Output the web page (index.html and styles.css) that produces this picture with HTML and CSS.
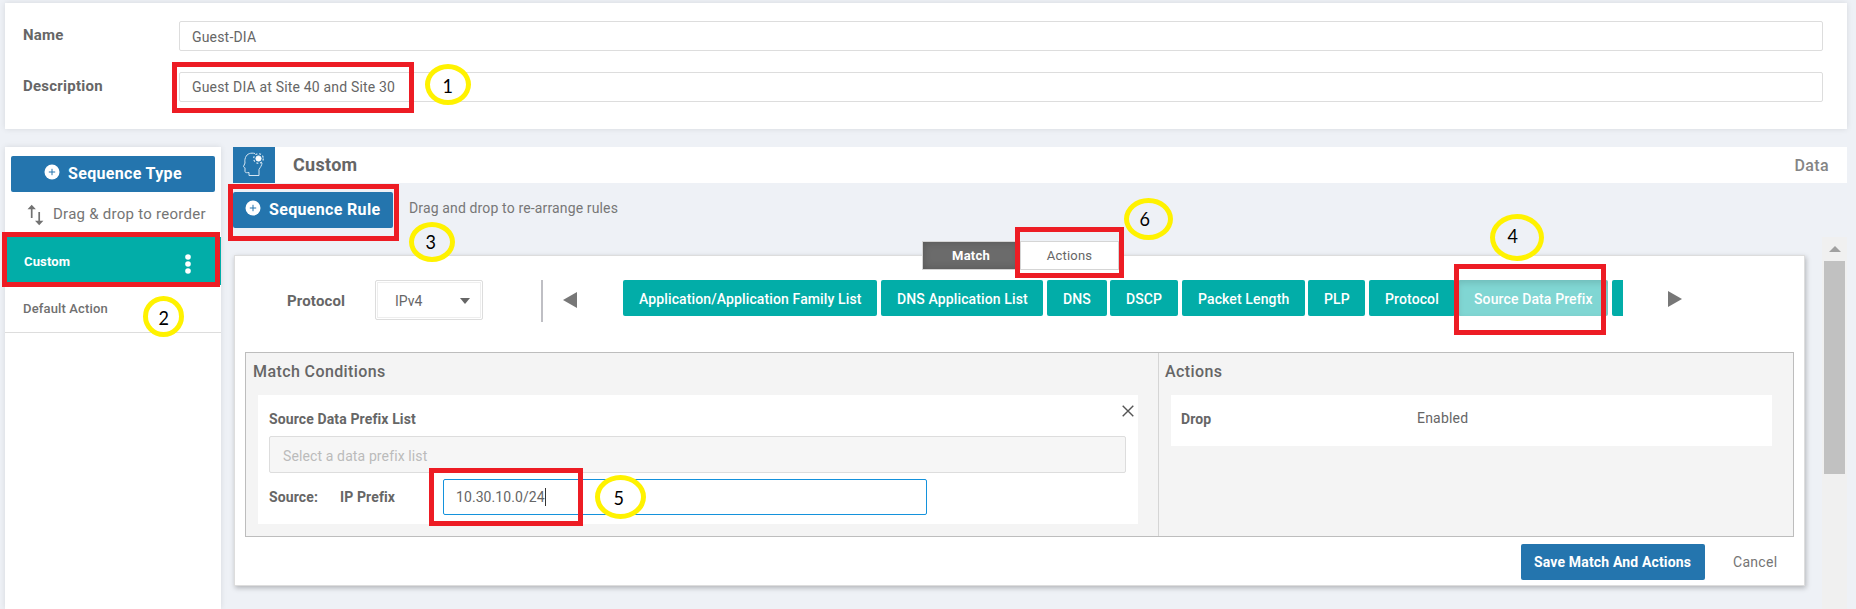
FILE: index.html
```html
<!DOCTYPE html>
<html lang="en">
<head>
<meta charset="utf-8">
<title>Data Policy</title>
<link rel="stylesheet" href="styles.css">
</head>
<body>
<div class="page">
  <section class="card details">
    <div class="field"><label class="field-label">Name</label><div class="input">Guest-DIA</div></div>
    <div class="field"><label class="field-label">Description</label><div class="input desc">Guest DIA at Site 40 and Site 30</div></div>
  </section>
  <div class="columns">
    <aside class="card sidebar">
      <button class="primary seq-type">
        <svg class="plus" viewBox="0 0 16 16" width="16" height="16"><circle cx="8" cy="8" r="7.5" fill="#fff"/><path d="M8 4.8v6.4M4.8 8h6.4" stroke="#2475ae" stroke-width="1"/></svg>
        <span class="seq-text">Sequence Type</span>
      </button>
      <div class="reorder">
        <svg class="sort" viewBox="0 0 18 22" width="18" height="22"><path d="M4.7 14V4M12.2 8v10" stroke="#727272" stroke-width="1.7" fill="none"/><path d="M.5 5.300 4.700.800 8.900 5.300zM8 16.700l4.200 4.500 4.200-4.500z" fill="#727272"/></svg>
        <span class="reorder-text">Drag &amp; drop to reorder</span>
      </div>
      <div class="seq-item active"><span class="active-text">Custom</span>
        <svg class="dots" viewBox="0 0 6 22" width="6" height="22"><g fill="#fff"><circle cx="3" cy="4" r="2.800"/><circle cx="3" cy="11" r="2.800"/><circle cx="3" cy="18" r="2.800"/></g></svg>
      </div>
      <div class="seq-item"><span class="default-text">Default Action</span></div>
    </aside>
    <main class="main">
      <header class="title-bar">
        <div class="title-icon">
          <svg viewBox="0 0 42 36" width="42" height="36" fill="none" stroke="#d5e6f2" stroke-width="1"><path d="M22 6.500C18 5.500 14 6.500 12.500 10.500c-1 2.500-.6 4.200-.5 5.500l-1.500 3.500c0 1 1.500.7 1.500 1.500v3.500c.2 1.600 2.500 1.200 4 1v3h10v-6c1.500-2.500 2.800-4 3-6.500"/><circle cx="25.500" cy="11.500" r="2.600" fill="#fff" stroke="#fff"/><circle cx="25.500" cy="11.500" r="4.800" stroke-width="1.200" stroke-dasharray="2 1.770"/></svg>
        </div>
        <h1 class="title">Custom</h1>
        <span class="kind">Data</span>
      </header>
      <div class="rule-row">
        <button class="primary seq-rule">
          <svg class="plus" viewBox="0 0 16 16" width="16" height="16"><circle cx="8" cy="8" r="7.500" fill="#fff"/><path d="M8 4.800v6.400M4.800 8h6.400" stroke="#2475ae" stroke-width="1"/></svg>
          <span class="seq-text">Sequence Rule</span>
        </button>
        <span class="rule-hint">Drag and drop to re-arrange rules</span>
      </div>
      <div class="scroll-area">
        <section class="panel">
          <div class="tabs"><div class="tab selected">Match</div><div class="tab plain">Actions</div></div>
          <div class="match-bar">
            <span class="protocol">Protocol</span>
            <div class="select"><span class="select-text">IPv4</span><svg viewBox="0 0 10 6" width="10" height="6"><path d="M0 0h10L5 6z" fill="#666"/></svg></div>
            <div class="separator"></div>
            <svg class="prev" viewBox="0 0 14 16" width="14" height="16"><path d="M14 0v16L0 8z" fill="#777"/></svg>
            <div class="chips">
              <div class="chip c1">Application/Application Family List</div>
              <div class="chip c2">DNS Application List</div>
              <div class="chip c3">DNS</div>
              <div class="chip c4">DSCP</div>
              <div class="chip c5">Packet Length</div>
              <div class="chip c6">PLP</div>
              <div class="chip c7">Protocol</div>
              <div class="chip c8">Source Data Prefix</div>
              <div class="chip c9"></div>
            </div>
            <svg class="next" viewBox="0 0 14 16" width="14" height="16"><path d="M0 0v16l14-8z" fill="#777"/></svg>
          </div>
          <div class="conditions">
            <div class="match-side">
              <h2 class="side-title mc">Match Conditions</h2>
              <div class="box">
                <div class="box-head"><span class="strong sdpl">Source Data Prefix List</span>
                  <svg class="close" viewBox="0 0 12 12" width="12" height="12"><path d="M.7.7l10.600 10.600M11.300.7.7 11.300" stroke="#555" stroke-width="1.400"/></svg>
                </div>
                <div class="list-input"><span class="placeholder">Select a data prefix list</span></div>
                <div class="source-row"><span class="strong src">Source:</span><span class="strong ipp">IP Prefix</span><div class="ip-input"><span class="ip">10.30.10.0/24</span><i class="caret"></i></div></div>
              </div>
            </div>
            <div class="action-side">
              <h2 class="side-title">Actions</h2>
              <div class="action-box"><span class="strong drop">Drop</span><span class="enabled">Enabled</span></div>
            </div>
          </div>
          <footer class="footer"><button class="primary save"><span class="save-text">Save Match And Actions</span></button><span class="cancel">Cancel</span></footer>
        </section>
        <div class="scrollbar"><svg viewBox="0 0 12 6" width="12" height="6"><path d="M0 6h12L6 0z" fill="#a0a0a0"/></svg><div class="thumb"></div></div>
      </div>
    </main>
  </div>
  <div class="mark m1"></div><div class="mark m2"></div><div class="mark m3"></div>
  <div class="mark m4"></div><div class="mark m5"></div><div class="mark m6"></div>
  <div class="badge b1"><span class="digit">1</span></div><div class="badge b2"><span class="digit">2</span></div><div class="badge b3"><span class="digit">3</span></div>
  <div class="badge b4"><span class="digit">4</span></div><div class="badge b5"><span class="digit">5</span></div><div class="badge b6"><span class="digit">6</span></div>
</div>
</body>
</html>
```
FILE: styles.css
```css
* { box-sizing: border-box; }
body { margin: 0; font-family: Roboto, "Liberation Sans", sans-serif; font-size: 14px; color: #666; background: #eef1f6; }
h1, h2 { margin: 0; font-weight: 500; }
button { border: 0; font-family: inherit; padding: 0; }
span, label, h1, h2 { white-space: nowrap; }
svg { flex: none; display: block; }
.page { position: relative; width: 1856px; height: 609px; overflow: hidden; padding: 3px 9px 0 5px; }
.card { background: #fff; box-shadow: 0 0 6px rgba(0, 0, 0, .1); }

.details { height: 126px; padding: 18px 24px 0 18px; display: flex; flex-direction: column; gap: 21px; }
.field { display: flex; height: 30px; }
.field-label { width: 156px; font-size: 15px; font-weight: 700; line-height: 28px; letter-spacing: .25px; }
.input { flex: 1; border: 1px solid #ddd; border-radius: 2px; padding-left: 12px; line-height: 30px; letter-spacing: .18px; }
.desc { line-height: 28px; }

.columns { display: flex; gap: 12px; margin-top: 18px; height: 462px; }
.sidebar { width: 216px; padding-top: 9px; }
.primary { background: #2475ae; color: #fff; border-radius: 2px; display: flex; align-items: center; height: 36px; font-weight: 700; }
.plus { margin-top: -5px; }
.seq-type { width: 204px; margin-left: 6px; padding-left: 33px; gap: 8px; font-size: 16px; }
.seq-rule { width: 160px; padding-left: 12px; gap: 8px; font-size: 16px; }
.seq-text { letter-spacing: .33px; padding-bottom: 2px; }
.reorder { height: 45px; display: flex; align-items: center; padding-left: 22px; gap: 8px; font-size: 15px; color: #757575; }
.reorder-text { letter-spacing: .26px; padding-bottom: 2px; }
.seq-item { height: 48px; display: flex; align-items: center; padding-left: 18px; border-bottom: 1px solid #ddd; font-size: 13px; font-weight: 500; color: #707070; letter-spacing: .15px; }
.active { background: #02ada8; color: #fff; font-weight: 700; border: 0; padding: 0 30px 0 19px; justify-content: space-between; }
.dots { margin-top: 5px; }

.main { flex: 1; }
.title-bar { height: 36px; background: #fff; display: flex; align-items: center; padding-right: 18px; }
.title-icon { width: 42px; height: 36px; background: #2475ae; }
.title { font-size: 18px; margin-left: 18px; font-weight: 700; letter-spacing: .3px; padding-bottom: 2px; }
.kind { margin-left: auto; font-size: 16px; font-weight: 500; color: #858585; letter-spacing: .35px; }
.rule-row { height: 54px; padding-top: 9px; display: flex; gap: 16px; }
.rule-hint { line-height: 32px; color: #777; letter-spacing: .14px; }
.scroll-area { display: flex; justify-content: space-between; height: 372px; }
.panel { width: 1571px; height: 331px; margin: 18px 0 0 1px; background: #fff; border: 1px solid #ddd; box-shadow: 1px 2px 5px rgba(0, 0, 0, .25); }
.scrollbar { width: 25px; background: #f0f0f0; padding-top: 9px; display: flex; flex-direction: column; align-items: center; }
.thumb { width: 21px; height: 213px; background: #c1c1c1; margin-top: 9px; }
.tabs { display: flex; height: 29px; margin: -15px 0 0 687px; font-size: 13px; text-align: center; line-height: 27px; letter-spacing: .2px; }
.tab { border: 1px solid #d5d5d5; }
.selected { width: 98px; background: #6b6b6b; color: #fff; font-weight: 700; box-shadow: inset 0 0 8px rgba(0, 0, 0, .2); }
.plain { width: 99px; background: #fff; }
.match-bar { display: flex; margin-top: 10px; height: 72px; padding-left: 52px; }
.protocol { width: 88px; font-size: 15px; font-weight: 700; line-height: 42px; letter-spacing: .15px; }
.select { width: 108px; height: 40px; border: 1px solid #ddd; box-shadow: inset 0 0 0 1px #fff, inset 0 0 0 2px #eee; border-radius: 2px; display: flex; align-items: center; justify-content: space-between; padding: 2px 12px 0 19px; }
.separator { width: 2px; height: 42px; background: #bfbfc4; margin-left: 58px; }
.prev { margin: 12px 0 0 20px; }
.chips { width: 1000px; display: flex; margin-left: 46px; overflow: hidden; gap: 4px; }
.chip { flex: none; white-space: nowrap; height: 36px; background: #02ada8; color: #fff; border-radius: 2px; padding-left: 16px; line-height: 38px; font-weight: 500; letter-spacing: .12px; }
.c1 { width: 254px; } .c2 { width: 162px; } .c3 { width: 60px; margin-right: -1px; } .c4 { width: 68px; }
.c5 { width: 123px; margin-right: -1px; } .c6 { width: 57px; } .c7 { width: 86px; margin-right: -1px; }
.c8 { width: 150px; background: #80d6d3; box-shadow: inset 0 3px 6px rgba(0, 0, 0, .12); }
.c9 { width: 40px; }
.next { margin: 11px 0 0 45px; }
.conditions { width: 1549px; height: 185px; margin-left: 10px; border: 1px solid #bdbdbd; background: #f4f4f4; display: flex; }
.match-side { width: 913px; border-right: 1px solid #d5d5d5; padding: 0 20px 0 12px; }
.side-title { height: 42px; line-height: 37px; font-size: 16px; letter-spacing: .4px; }
.mc { margin-left: -5px; }
.box { height: 129px; background: #fff; padding: 0 12px 0 11px; }
.box-head { height: 41px; display: flex; justify-content: space-between; }
.strong { font-weight: 700; line-height: 48px; letter-spacing: .12px; }
.close { margin: 10px -8px 0 0; }
.list-input { height: 37px; border: 1px solid #ddd; border-radius: 2px; background: #f6f6f6; color: #bbb; padding-left: 13px; line-height: 38px; letter-spacing: .12px; }
.source-row { display: flex; height: 36px; margin-top: 6px; }
.source-row .strong { line-height: 36px; }
.src { width: 71px; } .ipp { width: 103px; }
.ip-input { width: 484px; border: 1px solid #1492dc; border-radius: 2px; display: flex; align-items: center; padding-left: 12px; }
.ip { letter-spacing: .08px; }
.caret { width: 1px; height: 18px; background: #333; }
.action-side { flex: 1; padding: 0 21px 0 12px; }
.action-side .side-title { margin-left: -6px; }
.action-box { height: 51px; background: #fff; display: flex; padding-left: 10px; }
.drop { width: 236px; }
.enabled { line-height: 46px; letter-spacing: .2px; }
.footer { display: flex; margin-top: 7px; padding-left: 1286px; }
.save { width: 184px; padding-left: 13px; font-size: 14px; letter-spacing: .16px; }
.cancel { margin-left: 28px; line-height: 37px; color: #757575; letter-spacing: .3px; }

/* Callouts drawn over the interface */
.mark { position: absolute; border: 5px solid #ed1c24; }
.m1 { left: 172px; top: 62px; width: 242px; height: 51px; }
.m2 { left: 2px; top: 232px; width: 218px; height: 55px; }
.m3 { left: 228px; top: 184px; width: 171px; height: 57px; }
.m4 { left: 1454px; top: 264px; width: 152px; height: 71px; }
.m5 { left: 429px; top: 468px; width: 154px; height: 58px; }
.m6 { left: 1015px; top: 227px; width: 109px; height: 51px; }
.badge { position: absolute; border: 5px solid #fff200; border-radius: 50%; background: #fff; color: #000; font-family: Lato, sans-serif; font-size: 20px; display: flex; align-items: center; justify-content: center; }
.digit { transform: scaleX(.9); }
.b1 { left: 425px; top: 64px; width: 46px; height: 41px; }
.b2 { left: 143px; top: 296px; width: 41px; height: 41px; }
.b3 { left: 409px; top: 222px; width: 46px; height: 40px; background: #eef1f6; padding: 0 3px 3px 0; }
.b4 { left: 1490px; top: 214px; width: 54px; height: 47px; background: #eef1f6; padding: 0 9px 5px 0; }
.b5 { left: 595px; top: 475px; width: 51px; height: 44px; padding-right: 4px; }
.b6 { left: 1124px; top: 198px; width: 49px; height: 42px; background: #eef1f6; padding: 0 8px 3px 0; }
```
